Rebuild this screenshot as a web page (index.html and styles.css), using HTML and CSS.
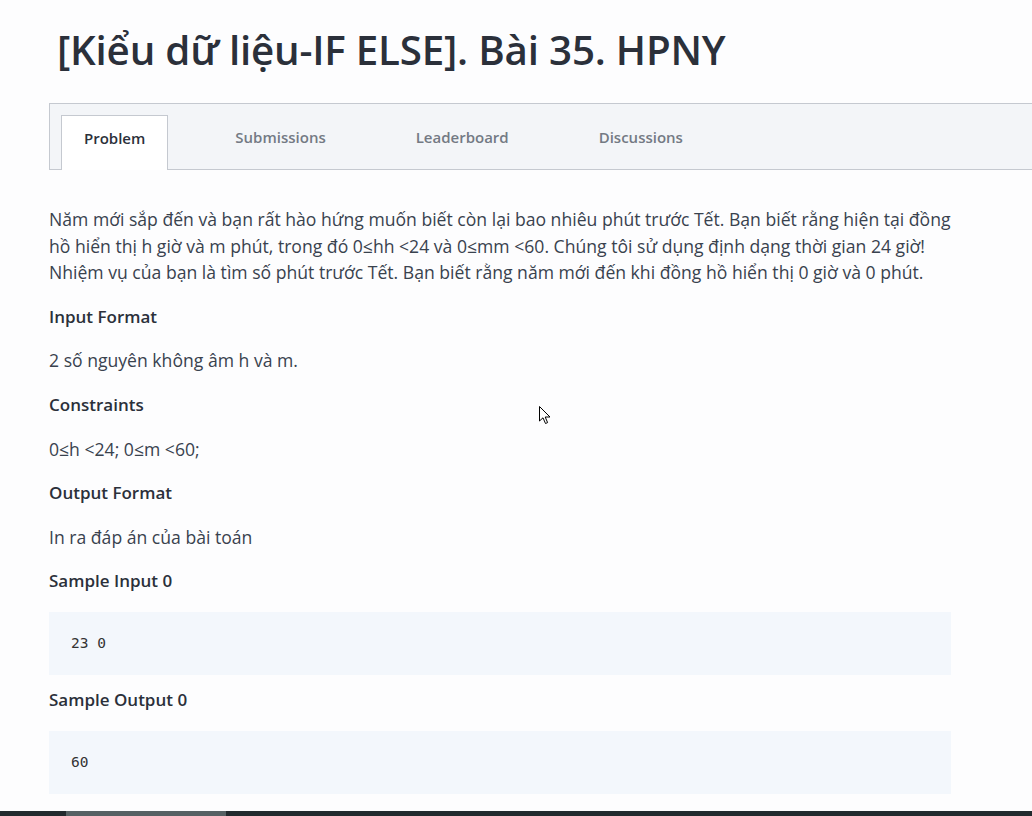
FILE: index.html
```html
<!DOCTYPE html>
<html lang="vi">
<head>
<meta charset="utf-8">
<title>HPNY</title>
<link rel="stylesheet" href="styles.css">
</head>
<body>
<div class="page">
  <h1 class="title">[Kiểu dữ liệu-IF ELSE]. Bài 35. HPNY</h1>
  <nav class="tabs">
    <div class="tab active">Problem</div>
    <div class="tab">Submissions</div>
    <div class="tab">Leaderboard</div>
    <div class="tab">Discussions</div>
  </nav>
  <div class="content">
    <p class="text">Năm mới sắp đến và bạn rất hào hứng muốn biết còn lại bao nhiêu phút trước Tết. Bạn biết rằng hiện tại đồng hồ hiển thị h giờ và m phút, trong đó 0≤hh &lt;24 và 0≤mm &lt;60. Chúng tôi sử dụng định dạng thời gian 24 giờ! Nhiệm vụ của bạn là tìm số phút trước Tết. Bạn biết rằng năm mới đến khi đồng hồ hiển thị 0 giờ và 0 phút.</p>
    <h3 class="heading">Input Format</h3>
    <p class="text">2 số nguyên không âm h và m.</p>
    <h3 class="heading">Constraints</h3>
    <p class="text">0≤h &lt;24; 0≤m &lt;60;</p>
    <h3 class="heading">Output Format</h3>
    <p class="text">In ra đáp án của bài toán</p>
    <h3 class="heading">Sample Input 0</h3>
    <pre class="code">23 0</pre>
    <h3 class="heading">Sample Output 0</h3>
    <pre class="code">60</pre>
  </div>
</div>
<div class="taskbar"><div class="taskbar-item"></div></div>
<svg class="cursor" width="12" height="19" viewBox="0 0 12 19"><path d="M0.5 0.5 L0.5 15 L4 11.8 L6.5 17.5 L8.6 16.6 L6.2 11 L11 11 Z" fill="#fff" stroke="#000" stroke-width="1"/></svg>
</body>
</html>
```
FILE: styles.css
```css
html, body {
  margin: 0;
  padding: 0;
  background: #fdfdfe;
  overflow: hidden;
}
body {
  width: 1032px;
  height: 816px;
  position: relative;
  font-family: "Open Sans", "Noto Sans", sans-serif;
  color: #39424e;
}
.page {
  padding-left: 49px;
  height: 811px;
  overflow: hidden;
}
.title {
  margin: 0;
  padding: 24px 0 0 8px;
  font-size: 40.3px;
  line-height: 52px;
  font-weight: 600;
  color: #2b303a;
  letter-spacing: -0.2px;
  box-sizing: border-box;
  height: 103px;
}
.tabs {
  display: flex;
  gap: 44px;
  background: #f3f5f8;
  border: 1px solid #c5c9d0;
  border-right: none;
  height: 67px;
  box-sizing: border-box;
  padding: 11px 0 0 11px;
  align-items: stretch;
}
.tab {
  padding: 0 23px;
  font-size: 15px;
  font-weight: 600;
  color: #737a84;
  line-height: 44px;
  margin-bottom: -1px;
}
.tab.active {
  background: #ffffff;
  border: 1px solid #c5c9d0;
  border-bottom: none;
  color: #2b303a;
  padding: 0 22px;
}
.content {
  width: 902px;
  padding-top: 36px;
}
.text {
  margin: 0 0 18px;
  font-size: 17.6px;
  line-height: 26.5px;
  color: #39424e;
}
.heading {
  margin: 0 0 18px;
  font-size: 17px;
  line-height: 25.8px;
  font-weight: 600;
  color: #2b303a;
}
.code {
  margin: 0 0 12px;
  background: #f3f7fc;
  height: 63px;
  box-sizing: border-box;
  padding: 0 22px;
  font-family: "DejaVu Sans Mono", monospace;
  font-size: 14.5px;
  line-height: 63px;
  color: #333;
}
.taskbar {
  position: absolute;
  left: 0;
  bottom: 0;
  width: 100%;
  height: 5px;
  background: #222a2e;
}
.taskbar-item {
  margin-left: 66px;
  width: 160px;
  height: 5px;
  background: #566164;
}
.cursor {
  position: absolute;
  left: 539px;
  top: 406px;
}
```
